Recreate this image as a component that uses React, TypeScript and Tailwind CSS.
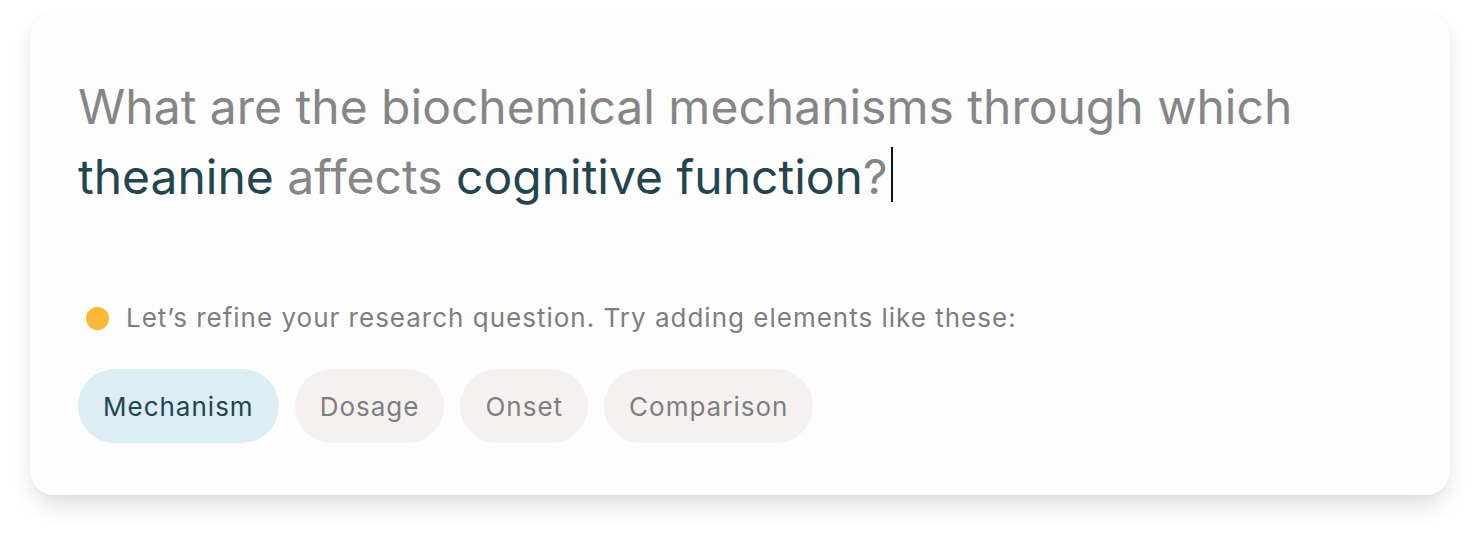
import React from "react";

export default function App() {
  const font = { fontFamily: "Inter, 'Noto Sans', sans-serif" };
  return (
    <div className="w-[1480px] h-[546px] bg-white pt-[12px] px-[30px]" style={font}>
      <div className="w-[1420px] h-[483px] rounded-[24px] bg-[#fefdfd] shadow-[0_14px_26px_-6px_rgba(0,0,0,0.14),0_2px_10px_rgba(0,0,0,0.04)] pt-[60px] pl-[48px] pr-[48px]">
        <div className="text-[48px] leading-[70px] tracking-[0px] text-[#868686]">
          What are the biochemical mechanisms through which
          <br />
          <span className="text-[#24444f]">theanine</span> affects{" "}
          <span className="text-[#24444f]">cognitive function</span>?
          <span className="inline-block w-[2px] h-[55px] bg-[#111] align-[-8px] ml-[4px]" />
        </div>
        <div className="mt-[88px] flex items-center gap-[17px] pl-[8px]">
          <span className="w-[23px] h-[23px] rounded-full bg-[#fdb836] shrink-0" />
          <span className="text-[26px] leading-[36px] tracking-[1px] text-[#7e7e7e]">
            Let’s refine your research question. Try adding elements like these:
          </span>
        </div>
        <div className="mt-[33px] flex gap-[16px] tracking-[1px] text-[26px]">
          <span className="h-[74px] px-[25px] rounded-full bg-[#dcedf3] text-[#24444f] flex items-center">
            Mechanism
          </span>
          <span className="h-[74px] px-[25px] rounded-full bg-[#f6f1f1] text-[#7e7e7e] flex items-center">
            Dosage
          </span>
          <span className="h-[74px] px-[25px] rounded-full bg-[#f6f1f1] text-[#7e7e7e] flex items-center">
            Onset
          </span>
          <span className="h-[74px] px-[25px] rounded-full bg-[#f6f1f1] text-[#7e7e7e] flex items-center">
            Comparison
          </span>
        </div>
      </div>
    </div>
  );
}
